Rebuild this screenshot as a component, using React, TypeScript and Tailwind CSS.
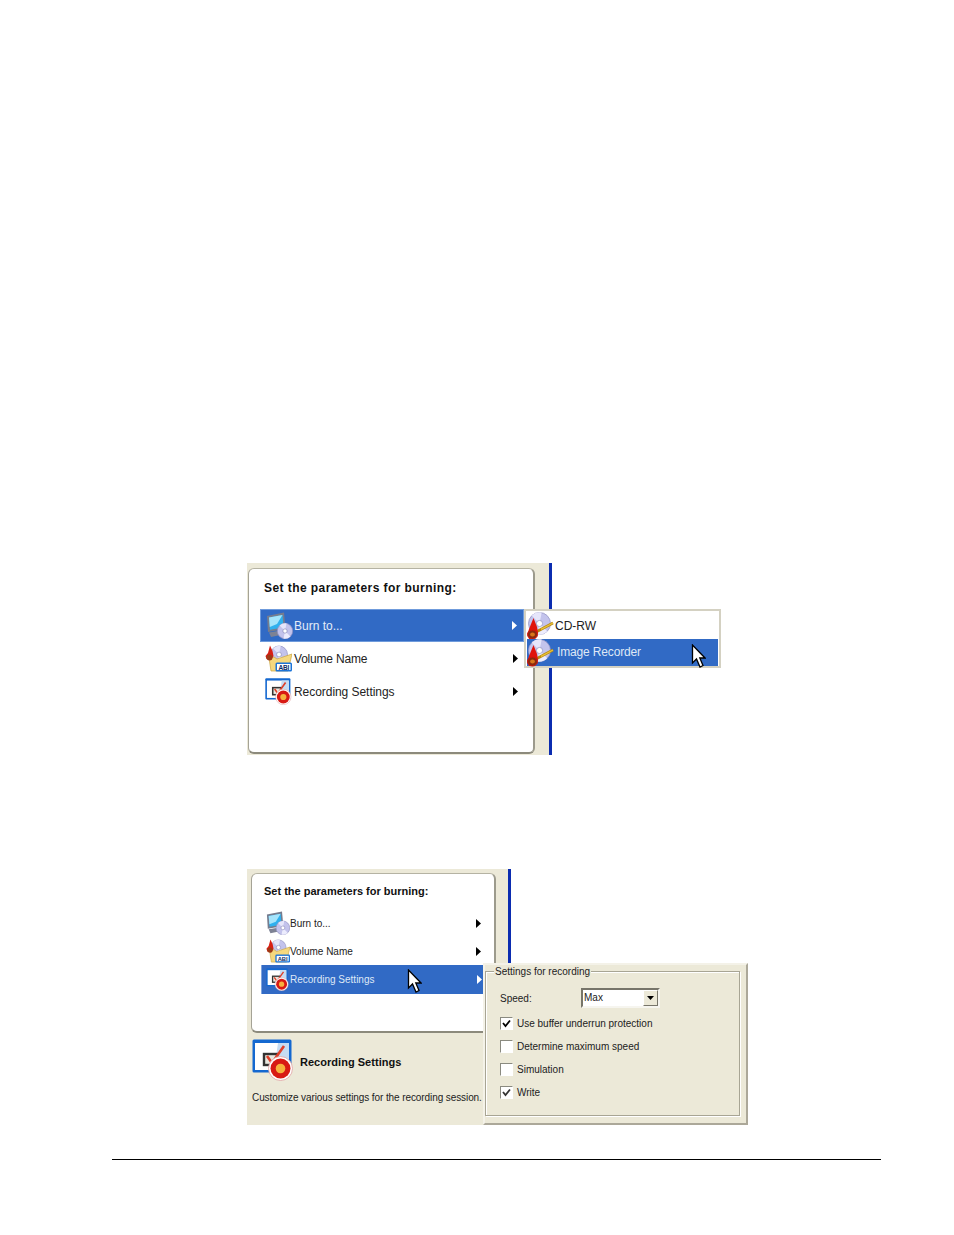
import React from "react";

const FONT = "font-['Liberation_Sans',Arial,sans-serif]";

function Cursor({ className }: { className?: string }) {
  return (
    <svg className={className} width="15" height="24" viewBox="0 0 15 24">
      <path d="M1.5 1 V19 L5.5 15 L9 23 L12 21.5 L8.8 14 H14 Z" fill="#fff" stroke="#000" strokeWidth="1.3" strokeLinejoin="miter" />
    </svg>
  );
}

function Arrow({ light }: { light?: boolean }) {
  return (
    <svg width="5" height="9" viewBox="0 0 5 9">
      <path d="M0 0 L5 4.5 L0 9 Z" fill={light ? "#fff" : "#000"} />
    </svg>
  );
}

function Disc({ cx, cy, r }: { cx: number; cy: number; r: number }) {
  return (
    <g>
      <circle cx={cx} cy={cy} r={r} fill="#c3c3ec" stroke="#8f8fc0" strokeWidth="0.7" />
      <path d={`M${cx - r * 0.7} ${cy - r * 0.7} A${r} ${r} 0 0 1 ${cx + r * 0.2} ${cy - r}  L${cx} ${cy} Z`} fill="#e6e6fb" />
      <path d={`M${cx + r * 0.7} ${cy + r * 0.7} A${r} ${r} 0 0 1 ${cx - r * 0.2} ${cy + r}  L${cx} ${cy} Z`} fill="#ececfd" />
      <circle cx={cx} cy={cy} r={r * 0.28} fill="#fff" stroke="#8080b0" strokeWidth="0.6" />
    </g>
  );
}

function MonitorDisc({ size = 27 }: { size?: number }) {
  return (
    <svg width={size} height={size} viewBox="0 0 27 27">
      <path d="M1 4 L18 0.5 L19.5 17 L2 20 Z" fill="#767c8e" />
      <path d="M3 5.5 L16.5 3 L17.5 15.5 L4 17.8 Z" fill="#2fb0ee" />
      <path d="M3 5.5 L16.5 3 L11 12 L3.8 15 Z" fill="#a5e4fb" />
      <path d="M3 20.5 L15 18.5 L17 22.5 L5 25 Z" fill="#7d8294" />
      <Disc cx={19} cy={19} r={7.7} />
    </svg>
  );
}

function FolderAbi({ size = 27 }: { size?: number }) {
  return (
    <svg width={size} height={size} viewBox="0 0 27 27">
      <Disc cx={14} cy={9.5} r={8.5} />
      <path d="M4 13 L9 12 L12 14 L27 9 L23 26 L6 26 Z" fill="#f5d87e" stroke="#c9a540" strokeWidth="0.7" />
      <path d="M5 0.5 L7.5 6 L8.5 11 L6 15 L1.5 14 L0.5 11 L3 8 Z" fill="#d81f14" />
      <circle cx="4.5" cy="12.5" r="3" fill="#9d3a16" />
      <rect x="10.5" y="17.5" width="16.5" height="9" rx="1.5" fill="#1c74d8" />
      <rect x="12" y="19" width="13.5" height="6" fill="#fff" />
      <text x="18.7" y="24.7" textAnchor="middle" fontSize="6.5" fontWeight="700" fontFamily="Liberation Sans" fill="#0a2a66">ABI</text>
    </svg>
  );
}

function RecSettings({ size = 27 }: { size?: number }) {
  return (
    <svg width={size} height={size} viewBox="0 0 42 42">
      <rect x="0.5" y="0.5" width="39" height="33" rx="1.5" fill="#1468d0" />
      <path d="M3 4 H37 V31 H3 Z" fill="#fff" />
      <path d="M26 4 H37 V31 H22 Z" fill="#c6dcf2" />
      <rect x="12" y="15" width="13" height="11" fill="#e8e8e0" stroke="#333" strokeWidth="2.4" />
      <path d="M15 17 L20 24 L32 7" fill="none" stroke="#e0402a" strokeWidth="2.6" />
      <circle cx="28.5" cy="29.5" r="12" fill="#fff" stroke="#e0a0a0" strokeWidth="0.8" />
      <circle cx="28.5" cy="29.5" r="10" fill="#d81a14" />
      <circle cx="28.5" cy="29.5" r="4.8" fill="#f6b23e" />
    </svg>
  );
}

function DiscFlame() {
  return (
    <svg width="27" height="28" viewBox="0 0 27 28">
      <Disc cx={12.5} cy={11.5} r={11} />
      <path d="M26 11 L9 20" stroke="#b98a10" strokeWidth="2.6" />
      <path d="M26 11 L14 17.4" stroke="#e9c23a" strokeWidth="1.2" />
      <path d="M6.5 6 L10 15 L11 21 L8 26 L2 27 L0.5 22 L2 17 Z" fill="#e0140c" />
      <ellipse cx="5.5" cy="22.5" rx="5" ry="4.5" fill="#8c2a0e" stroke="#d8140c" strokeWidth="1" />
      <ellipse cx="5.5" cy="22.5" rx="2.4" ry="2" fill="#d8761a" />
    </svg>
  );
}

function Checkbox({ checked, grey }: { checked?: boolean; grey?: boolean }) {
  return (
    <span className="flex h-[13px] w-[13px] shrink-0 items-center justify-center border border-t-[#8a8a80] border-l-[#8a8a80] border-r-white border-b-white bg-white">
      {checked && (
        <svg width="9" height="9" viewBox="0 0 9 9">
          <path d="M1 4 L3.5 7 L8 1.5" fill="none" stroke={grey ? "#333" : "#000"} strokeWidth="1.8" />
        </svg>
      )}
    </span>
  );
}

function CheckRow({ label, checked, grey, className }: { label: string; checked?: boolean; grey?: boolean; className?: string }) {
  return (
    <div className={"flex h-[13px] items-center gap-[4px] text-[10px] text-[#222] " + (className ?? "")}>
      <Checkbox checked={checked} grey={grey} />
      <span>{label}</span>
    </div>
  );
}

export default function App() {
  return (
    <div className={"h-[1235px] w-[954px] overflow-hidden bg-white pt-[563px] pl-[112px] " + FONT}>
      {/* First figure */}
      <div className="relative ml-[135px] flex h-[192px] w-[305px] border-r-[3px] border-[#0b2cb0] bg-[#ece9d8] pt-[5px] pl-px blur-[0.3px]">
        <div className="flex h-[186px] w-[287px] flex-col rounded-[6px] border border-r-2 border-b-2 border-t-[#b5b3a3] border-l-[#a5a396] border-r-[#9c9a8c] border-b-[#8c8a7c] bg-white pt-[11px] pl-[11px]">
          <div className="h-[17px] pl-[4px] text-[12px] leading-[17px] font-bold tracking-[0.43px] text-[#111]">
            Set the parameters for burning:
          </div>
          <div className="mt-[12px] flex flex-col">
            <div className="flex h-[33px] w-[264px] items-center border border-[#6f9bdc] bg-[#316ac5] pl-[5px] text-[12px] text-[#e4ecf8]">
              <MonitorDisc />
              <span className="ml-px">Burn to...</span>
              <span className="ml-auto mr-[6px] flex"><Arrow light /></span>
            </div>
            <div className="flex h-[33px] w-[264px] items-center pl-[5px] text-[12px] tracking-[-0.2px] text-[#222]">
              <FolderAbi />
              <span className="ml-[2px]">Volume Name</span>
              <span className="ml-auto mr-[6px] flex"><Arrow /></span>
            </div>
            <div className="flex h-[33px] w-[264px] items-center pl-[5px] text-[12px] tracking-[-0.05px] text-[#222]">
              <RecSettings />
              <span className="ml-[2px]">Recording Settings</span>
              <span className="ml-auto mr-[6px] flex"><Arrow /></span>
            </div>
          </div>
        </div>

        {/* Burn-to submenu */}
        <div className="absolute top-[46px] left-[277px] flex h-[59px] w-[197px] flex-col border-2 border-[#d4d1c2] bg-white p-px text-[12px]">
          <div className="flex h-[27px] items-center text-[#222]">
            <DiscFlame />
            <span className="ml-px">CD-RW</span>
          </div>
          <div className="flex h-[27px] items-center bg-[#316ac5] tracking-[-0.15px] text-[#dfe8f6]">
            <DiscFlame />
            <span className="ml-[3px] pb-[2px]">Image Recorder</span>
          </div>
        </div>
        <Cursor className="absolute top-[81px] left-[444px]" />
      </div>

      {/* Second figure */}
      <div className="relative mt-[114px] ml-[135px] flex h-[256px] w-[264px] flex-col border-r-[3px] border-[#0b2cb0] bg-[#ece9d8] pt-[4px] pl-[4px] blur-[0.3px]">
        <div className="flex h-[160px] w-[245px] flex-col rounded-[6px] border border-r-2 border-b-2 border-t-[#b5b3a3] border-l-[#a5a396] border-r-[#9c9a8c] border-b-[#8c8a7c] bg-white pt-[9px] pl-[9px]">
          <div className="h-[16px] pl-[3px] text-[11px] leading-[16px] font-bold text-[#111]">
            Set the parameters for burning:
          </div>
          <div className="mt-[10px] flex flex-col">
            <div className="flex h-[28px] w-[222px] items-center pl-[5px] text-[10px] text-[#222]">
              <MonitorDisc size={24} />
              <span>Burn to...</span>
              <span className="ml-auto mr-[2px] flex"><Arrow /></span>
            </div>
            <div className="flex h-[28px] w-[222px] items-center pl-[5px] text-[10px] text-[#222]">
              <FolderAbi size={24} />
              <span>Volume Name</span>
              <span className="ml-auto mr-[2px] flex"><Arrow /></span>
            </div>
            <div className="flex h-[29px] w-[222px] items-center border-l border-[#7fa3de] bg-[#316ac5] pl-[4px] text-[10px] text-[#dfe8f6]">
              <RecSettings size={23} />
              <span className="ml-px">Recording Settings</span>
              <span className="ml-auto mr-[1px] flex"><Arrow light /></span>
            </div>
          </div>
        </div>
        <div className="mt-[6px] flex items-center gap-[6px] pl-px">
          <RecSettings size={42} />
          <span className="mt-[4px] text-[11px] font-bold tracking-[0.03px] text-[#111]">Recording Settings</span>
        </div>
        <div className="mt-[10px] pl-px text-[10px] leading-[14px] tracking-[-0.09px] whitespace-nowrap text-[#222]">
          Customize various settings for the recording session.
        </div>

        <Cursor className="absolute top-[100px] left-[160px]" />

        {/* Settings panel */}
        <div className="absolute top-[94px] left-[236px] h-[162px] w-[265px] border-2 border-t-[#f4f2e8] border-l-[#f4f2e8] border-r-[#aca899] border-b-[#aca899] bg-[#ece9d8] pt-[6px] pr-[6px] pb-[7px]">
          <div className="relative h-[145px] border border-[#a8a594] shadow-[1px_1px_0_#fff,inset_1px_1px_0_#fff]">
            <span className="absolute -top-[7px] left-[8px] bg-[#ece9d8] px-px text-[10px] leading-[13px] text-[#222]">
              Settings for recording
            </span>
            <div className="flex flex-col pt-[15px] pl-[14px]">
              <div className="flex h-[21px] items-center">
                <span className="w-[81px] pt-[2px] text-[10px] text-[#222]">Speed:</span>
                <div className="flex h-[20px] w-[79px] items-center justify-between border-2 border-t-[#77756a] border-l-[#77756a] border-r-[#f6f5ef] border-b-[#f6f5ef] bg-white pl-px text-[10px] text-[#222]">
                  <span>Max</span>
                  <span className="flex h-full w-[15px] items-center justify-center border border-t-white border-l-white border-r-[#77756a] border-b-[#77756a] bg-[#ece9d8]">
                    <svg width="7" height="4" viewBox="0 0 7 4"><path d="M0 0 H7 L3.5 4 Z" fill="#000" /></svg>
                  </span>
                </div>
              </div>
              <CheckRow className="mt-[9px]" label="Use buffer underrun protection" checked />
              <CheckRow className="mt-[10px]" label="Determine maximum speed" />
              <CheckRow className="mt-[10px]" label="Simulation" />
              <CheckRow className="mt-[10px]" label="Write" checked grey />
            </div>
          </div>
        </div>
      </div>

      <div className="mt-[34px] h-px w-[769px] bg-black" />
    </div>
  );
}
